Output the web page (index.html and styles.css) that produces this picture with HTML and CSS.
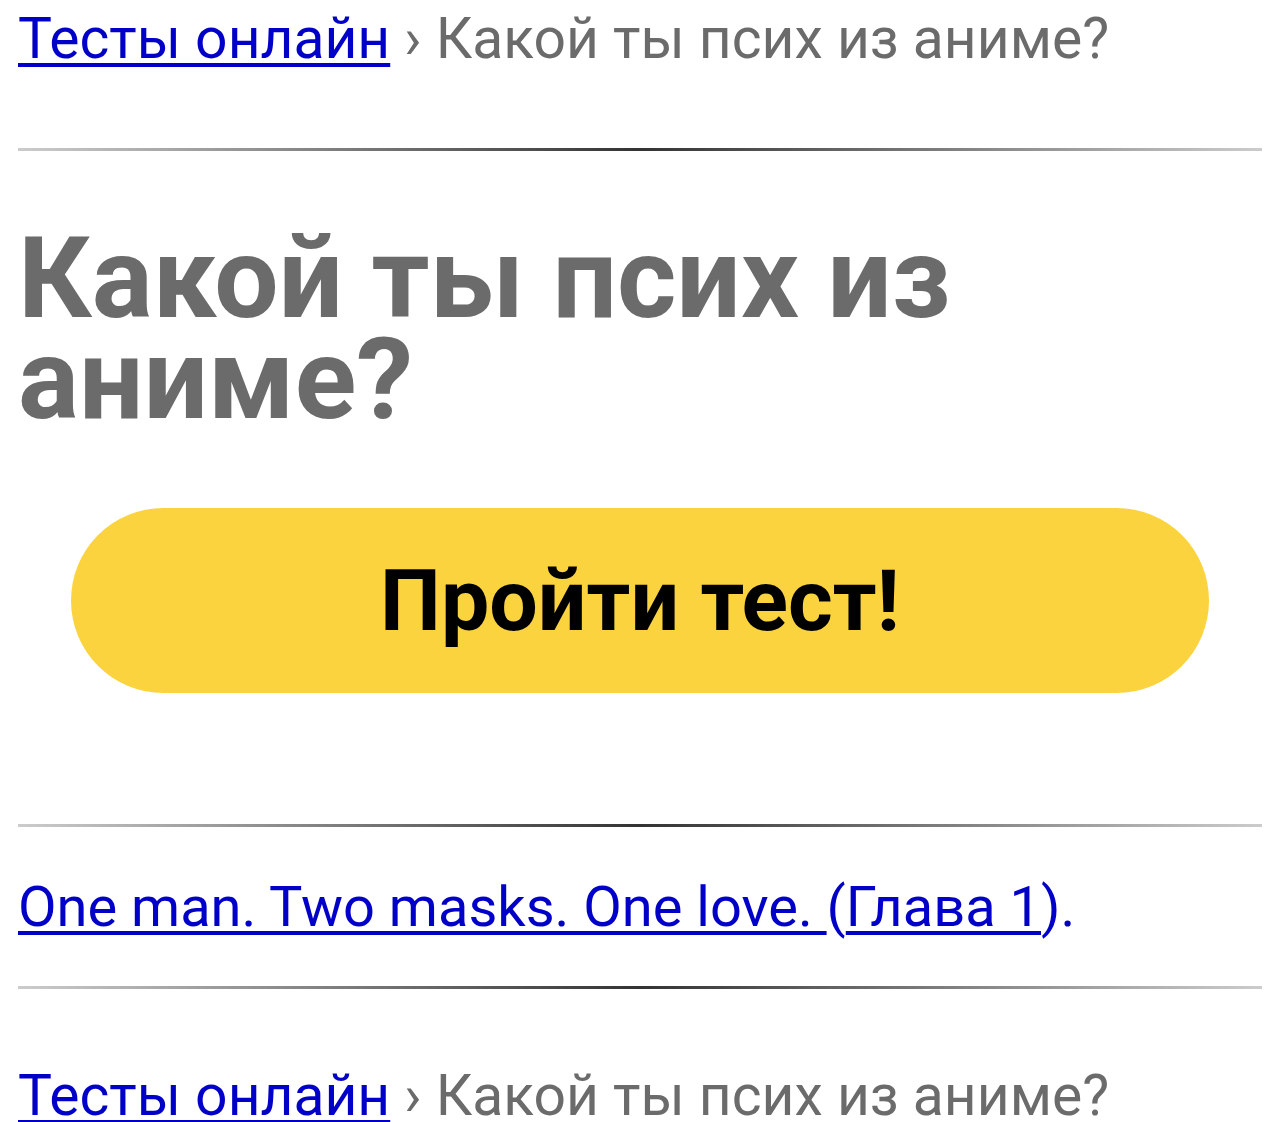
FILE: index.html
```html
<!DOCTYPE html>
<html lang="ru">
<head>
  <meta charset="UTF-8" />
  <meta name="viewport" content="width=device-width, initial-scale=1" />
  <title>Какой ты псих из аниме?</title>
  <link rel="stylesheet" href="styles.css">
</head>
<body>

  <div class="page">
    <div class="crumbs">
      <a href="#">Тесты онлайн</a> › Какой ты псих из аниме?
    </div>

    <hr class="sep sep-top">

    <h1>Какой ты псих из аниме?</h1>

    <a class="start" href="#">Пройти тест!</a>

    <hr class="sep sep-mid">

    <p class="story">
      <a href="#">One man. Two masks. One love. </a>(<a href="#">Глава 1</a>).
    </p>

    <hr class="sep sep-low">

    <div class="crumbs crumbs-bottom">
      <a href="#">Тесты онлайн</a> › Какой ты псих из аниме?
    </div>
  </div>

</body>
</html>
```

FILE: styles.css
```css
:root{
  --link:#0000c8;
  --muted:#6b6b6b;
  --yellow:#fbd33f;
}
*{box-sizing:border-box;margin:0;padding:0}
body{
  background:#fff;
  font-family:Roboto,"Noto Sans",Arial,sans-serif;
  color:var(--muted);
}
.page{
  padding:6px 18px 0;
  display:flex;
  flex-direction:column;
}
a{color:var(--link);text-decoration:underline;text-decoration-thickness:4px;text-underline-offset:5px}

.crumbs{font-size:57px;line-height:66px;color:var(--muted)}
.crumbs-bottom{margin-top:74px}

.sep{
  border:none;
  height:3px;
  background:linear-gradient(to right,#ccc,#333 50%,#ccc);
}
.sep-top{margin-top:76px}
.sep-mid{margin-top:131px}
.sep-low{margin-top:46px}

h1{
  margin-top:77px;
  font-size:114px;
  line-height:101px;
  font-weight:700;
  color:var(--muted);
}

.start{
  margin:78px 53px 0;
  height:185px;
  border-radius:93px;
  background:var(--yellow);
  color:#000;
  text-decoration:none;
  display:flex;
  align-items:center;
  justify-content:center;
  font-size:86px;
  font-weight:700;
}

.story{
  margin-top:47px;
  font-size:56px;
  line-height:66px;
  color:var(--link);
}
```
